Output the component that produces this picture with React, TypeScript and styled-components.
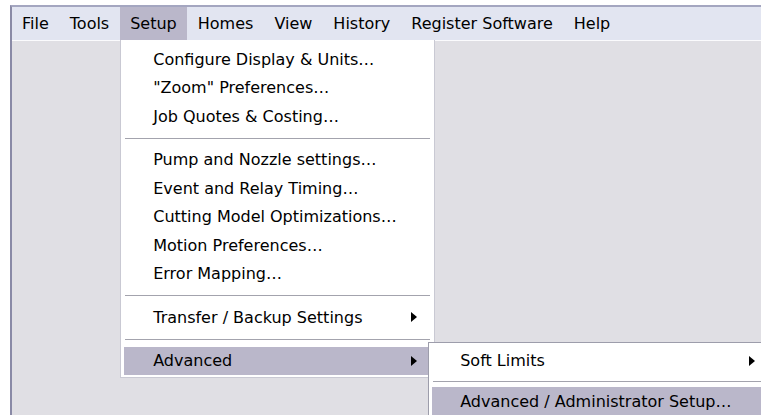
import React from "react";
import styled, { createGlobalStyle } from "styled-components";

const Global = createGlobalStyle`
  html, body {
    margin: 0;
    padding: 0;
    background: #ffffff;
    height: 100%;
    overflow: hidden;
  }
  #root {
    height: 100%;
  }
`;

const Page = styled.div`
  height: 100%;
  box-sizing: border-box;
  padding: 5px 0 0 10px;
  font-family: "DejaVu Sans", Tahoma, sans-serif;
  font-size: 16px;
  color: #000;
`;

const Frame = styled.div`
  height: 100%;
  display: flex;
  flex-direction: column;
  border-left: 2px solid #8a8aa6;
  border-top: 2px solid #a4a6c0;
  position: relative;
`;

const MenuBar = styled.div`
  height: 33px;
  display: flex;
  align-items: stretch;
  gap: 1px;
  background: #e2e5f1;
  flex-shrink: 0;
`;

const BarItem = styled.div<{ $open?: boolean }>`
  position: relative;
  display: flex;
  align-items: center;
  padding: 0 10px;
  background: ${(p) => (p.$open ? "#bab7ca" : "transparent")};
  white-space: nowrap;
`;

const Workspace = styled.div`
  flex: 1;
  background: #e0dfe4;
  border-top: 1px solid #fbfbfd;
`;

const Dropdown = styled.div`
  position: absolute;
  top: 100%;
  left: 0;
  width: 315px;
  box-sizing: border-box;
  background: #ffffff;
  border: 1px solid #c9c9d3;
  border-top: none;
  padding: 5px 3px 2px 3px;
  display: flex;
  flex-direction: column;
  z-index: 10;
`;

const Item = styled.div<{ $active?: boolean; $indent?: number }>`
  position: relative;
  height: 28.5px;
  display: flex;
  align-items: center;
  padding-left: ${(p) => p.$indent ?? 29}px;
  padding-right: 14px;
  background: ${(p) => (p.$active ? "#bab7ca" : "transparent")};
  white-space: nowrap;
`;

const Label = styled.span`
  flex: 1;
`;

const Arrow = styled.span`
  width: 0;
  height: 0;
  border-top: 5px solid transparent;
  border-bottom: 5px solid transparent;
  border-left: 6px solid #000;
`;

const Separator = styled.div<{ $tight?: boolean }>`
  height: ${(p) => (p.$tight ? 12 : 15)}px;
  display: flex;
  align-items: center;
  padding: 0 1px;
  &::after {
    content: "";
    flex: 1;
    height: 1px;
    background: #a3a3ad;
    box-shadow: 0 1px 0 #ffffff;
  }
`;

const Submenu = styled.div`
  position: absolute;
  left: 304px;
  top: -5px;
  width: 345px;
  box-sizing: border-box;
  background: #ffffff;
  border: 1px solid #9d9dab;
  padding: 4px 3px 2px 3px;
  display: flex;
  flex-direction: column;
  z-index: 11;
`;

type Entry = { label: string; sub?: boolean } | "sep";

const setupEntries: Entry[] = [
  { label: "Configure Display & Units…" },
  { label: "\"Zoom\" Preferences…" },
  { label: "Job Quotes & Costing…" },
  "sep",
  { label: "Pump and Nozzle settings…" },
  { label: "Event and Relay Timing…" },
  { label: "Cutting Model Optimizations…" },
  { label: "Motion Preferences…" },
  { label: "Error Mapping…" },
  "sep",
  { label: "Transfer / Backup Settings", sub: true },
  "sep",
];

const barLabels = ["File", "Tools", "Setup", "Homes", "View", "History", "Register Software", "Help"];

export default function App() {
  return (
    <>
      <Global />
      <Page>
        <Frame>
          <MenuBar>
            {barLabels.map((name) => (
              <BarItem key={name} $open={name === "Setup"}>
                {name}
                {name === "Setup" && (
                  <Dropdown>
                    {setupEntries.map((e, i) =>
                      e === "sep" ? (
                        <Separator key={i} />
                      ) : (
                        <Item key={i}>
                          <Label>{e.label}</Label>
                          {e.sub && <Arrow />}
                        </Item>
                      )
                    )}
                    <Item $active>
                      <Label>Advanced</Label>
                      <Arrow />
                      <Submenu>
                        <Item $indent={28}>
                          <Label>Soft Limits</Label>
                          <Arrow />
                        </Item>
                        <Separator $tight />
                        <Item $active $indent={28}>
                          <Label>Advanced / Administrator Setup…</Label>
                        </Item>
                      </Submenu>
                    </Item>
                  </Dropdown>
                )}
              </BarItem>
            ))}
          </MenuBar>
          <Workspace />
        </Frame>
      </Page>
    </>
  );
}
